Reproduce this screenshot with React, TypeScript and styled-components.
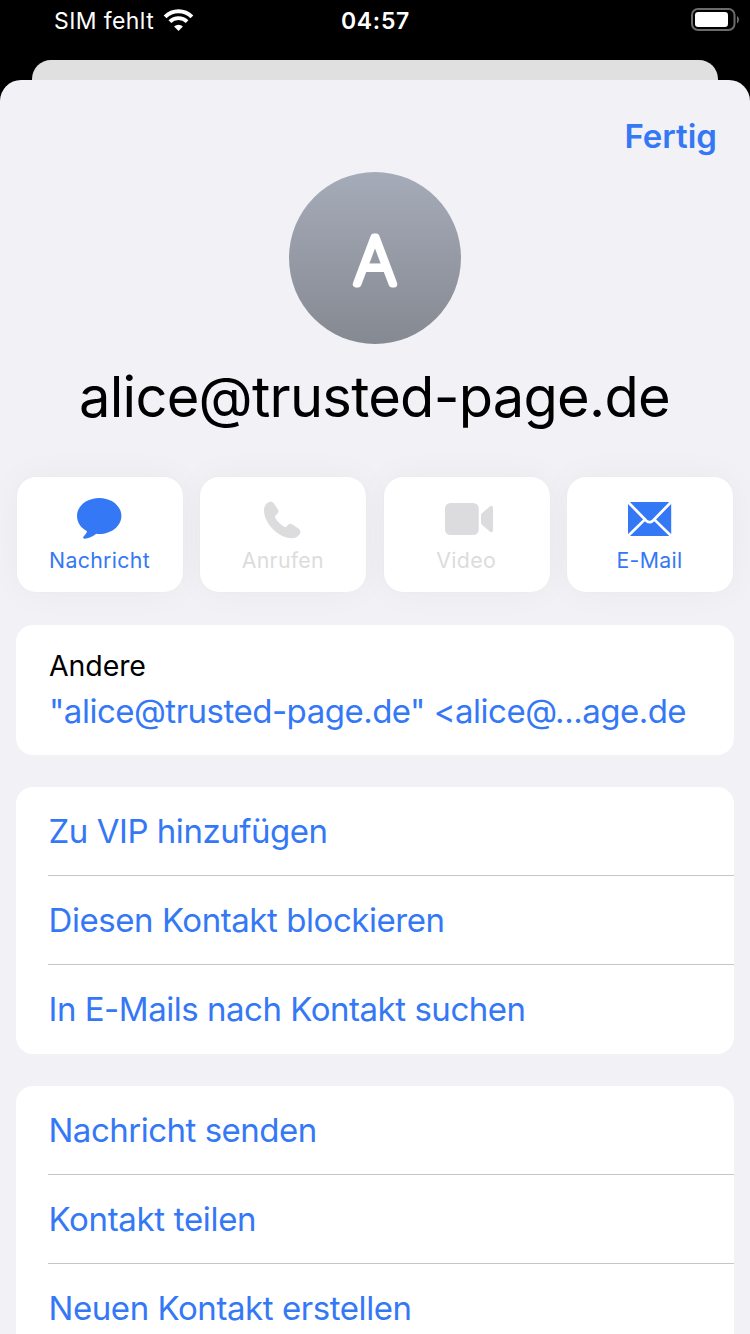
import React from 'react';
import styled, { createGlobalStyle } from 'styled-components';

const BLUE = '#3478f6';
const DISABLED = '#dcdcde';

const GlobalStyle = createGlobalStyle`
  * { box-sizing: border-box; }
  html, body { margin: 0; padding: 0; background: #000; overflow: hidden; }
  body { font-family: Inter, "Liberation Sans", sans-serif; color: #000; }
`;

const Screen = styled.div`
  width: 750px;
  height: 1334px;
  overflow: hidden;
  display: flex;
  flex-direction: column;
  background: #000;
`;

const StatusBar = styled.header`
  flex: none;
  height: 60px;
  padding: 0 11px 0 54px;
  display: grid;
  grid-template-columns: 1fr auto 1fr;
  align-items: start;
  color: #fff;
  font-size: 23px;
  line-height: 43px;
`;

const Carrier = styled.div`
  display: flex;
  gap: 9px;
  letter-spacing: 0.4px;
`;

const Clock = styled.time`
  font-weight: 600;
  letter-spacing: 0.7px;
  margin-right: 42px;
`;

const BatterySlot = styled.div`
  display: flex;
  justify-content: flex-end;
  padding-top: 7px;
`;

const WifiSvg = styled.svg`
  display: block;
  margin-top: 8px;
`;

const BackSheet = styled.div`
  flex: none;
  height: 20px;
  margin: 0 32px;
  border-radius: 19px 19px 0 0;
  background: #e0e0e0;
`;

const Sheet = styled.main`
  flex: 1;
  min-height: 0;
  display: flex;
  flex-direction: column;
  border-radius: 21px 21px 0 0;
  background: #f2f1f6;
  overflow: hidden;
`;

const SheetHeader = styled.div`
  flex: none;
  height: 92px;
  padding: 36px 33px 0;
  display: flex;
  justify-content: flex-end;
`;

const DoneButton = styled.button`
  height: 40px;
  padding: 0;
  border: 0;
  background: none;
  color: ${BLUE};
  font: 600 33px/40px Inter, "Liberation Sans", sans-serif;
  letter-spacing: 0;
`;

const Avatar = styled.div`
  flex: none;
  align-self: center;
  width: 172px;
  height: 172px;
  border-radius: 50%;
  background: linear-gradient(#a6abb9, #858991);
`;

const Monogram = styled.text`
  font-family: Inter, "Liberation Sans", sans-serif;
  font-size: 65px;
  font-weight: 100;
  text-anchor: middle;
  fill: #fff;
  stroke: #fff;
  stroke-width: 7px;
  stroke-linejoin: round;
`;

const Name = styled.h1`
  flex: none;
  margin: 19px 0 0;
  text-align: center;
  font-size: 56px;
  font-weight: 400;
  line-height: 68px;
  letter-spacing: -0.73px;
  text-indent: -1px;
  white-space: nowrap;
`;

const Actions = styled.nav`
  flex: none;
  margin: 46px 17px 0;
  display: flex;
  justify-content: space-between;
`;

const ActionButton = styled.button<{ $tint: string }>`
  width: 166px;
  height: 115px;
  padding: 16px 0 0;
  border: 0;
  border-radius: 19px;
  display: flex;
  flex-direction: column;
  align-items: center;
  gap: 6px;
  background: #fff;
  box-shadow: 0 0 2px rgba(0, 0, 0, 0.04), 0 0 36px rgba(0, 0, 0, 0.04);
  color: ${(p) => p.$tint};
  font: 400 21.3px/26px Inter, "Liberation Sans", sans-serif;
  letter-spacing: 0.32px;
`;

const ActionLabel = styled.span`
  margin-right: 1px;
`;

const ActionIcon = styled.svg`
  flex: none;
  display: block;
  fill: currentColor;
`;

const Card = styled.section<{ $gap: number }>`
  flex: none;
  margin: ${(p) => p.$gap}px 16px 0;
  border-radius: 17px;
  background: #fff;
  overflow: hidden;
`;

const Field = styled.div`
  height: 130px;
  padding: 23px 0 0 33px;
  white-space: nowrap;
`;

const FieldLabel = styled.div`
  font-size: 28.5px;
  line-height: 36px;
  letter-spacing: -0.1px;
`;

const FieldValue = styled.div`
  margin: 7px 0 0;
  color: ${BLUE};
  font-size: 33px;
  line-height: 40px;
  letter-spacing: -0.5px;
`;

const List = styled.ul`
  margin: 0;
  padding: 0 0 0 32px;
  list-style: none;
`;

const ListRow = styled.li<{ $tracking: number }>`
  height: 89px;
  border-bottom: 1px solid #c6c6c8;
  color: ${BLUE};
  font-size: 33px;
  line-height: 88px;
  letter-spacing: ${(p) => p.$tracking}px;
  text-indent: 0.5px;
  white-space: nowrap;
  &:last-child { border-bottom: 0; }
`;

const Wifi = () => (
  <WifiSvg width="32" height="24" viewBox="0 0 32 24" fill="none" stroke="#fff">
    <path d="M2.1 8.8a19 19 0 0 1 26.8 0" strokeWidth="4" />
    <path d="M6.9 13.7a12.2 12.2 0 0 1 17.2 0" strokeWidth="3.8" />
    <path d="M15.5 22.9l-4.4-4.4a6.2 6.2 0 0 1 8.8 0z" fill="#fff" stroke="none" />
  </WifiSvg>
);

const Battery = () => (
  <svg width="48" height="26" viewBox="0 0 48 26">
    <rect x="1" y="2" width="42.5" height="21" rx="6" fill="none" stroke="#6b6b6b" strokeWidth="2" />
    <rect x="4" y="5" width="33" height="15" rx="3.2" fill="#fff" />
    <path d="M46 9c2.6 1.4 2.6 6 0 7.4z" fill="#6b6b6b" />
  </svg>
);

const icons = {
  message: (
    <path d="M27.2 5C39.5 5 49.4 13 49.4 23S39.5 41 27.2 41q-1.6 0-2.9-.2C20.5 43.9 16.5 45.7 12.6 45.7c-1.5 0-1.9-1.2-1-2.2 1.5-1.6 3-3.3 3.4-5.3C8.8 34.9 5 29.400 5 23 5 13 14.9 5 27.2 5z" />
  ),
  phone: (
    <path d="M9 17.5C9 12.5 12.2 8.7 15.6 8.7c1.5 0 2.4.6 3.3 1.9l3.9 5.7c1 1.5.9 2.9-.3 4.2l-2.1 2.2c-.5.5-.6.9-.3 1.6 1.2 3 5.7 7.8 9.4 9.6.8.4 1.2.3 1.7-.2l2-2c1.4-1.3 2.6-1.4 4.2-.3l6.1 4.2c1.400 1 1.9 1.9 1.9 3.2 0 3.5-3.9 6.4-8.6 6.4C23.5 45.2 9 30 9 17.5z" />
  ),
  video: (
    <>
      <rect x="6" y="10" width="33.7" height="32" rx="5.5" />
      <path d="M42 22.2q0-1.2.9-1.9l8.2-7q.9-.7 1.5-.5 1.4.3 1.4 2.2v22q0 1.9-1.4 2.2-.6.2-1.5-.5l-8.2-7q-.9-.7-.9-1.9z" />
    </>
  ),
  mail: (
    <>
      <rect x="6" y="9" width="43.2" height="34" rx="2.4" />
      <path
        d="M5.5 8.5L24.3 27.700q3.3 3 6.6 0L49.7 8.5M5.5 43.5L23 26.4M49.7 43.5L32.2 26.4"
        fill="none"
        stroke="#fff"
        strokeWidth="2.7"
      />
    </>
  ),
};

const actions: { label: string; icon: keyof typeof icons; enabled: boolean }[] = [
  { label: 'Nachricht', icon: 'message', enabled: true },
  { label: 'Anrufen', icon: 'phone', enabled: false },
  { label: 'Video', icon: 'video', enabled: false },
  { label: 'E-Mail', icon: 'mail', enabled: true },
];

const groups = [
  [
    { label: 'Zu VIP hinzufügen', tracking: -0.46 },
    { label: 'Diesen Kontakt blockieren', tracking: -0.44 },
    { label: 'In E-Mails nach Kontakt suchen', tracking: -0.47 },
  ],
  [
    { label: 'Nachricht senden', tracking: -0.5 },
    { label: 'Kontakt teilen', tracking: -0.32 },
    { label: 'Neuen Kontakt erstellen', tracking: -0.43 },
  ],
];

export default function App() {
  return (
    <Screen>
      <GlobalStyle />
      <StatusBar>
        <Carrier>
          <span>SIM fehlt</span>
          <Wifi />
        </Carrier>
        <Clock>04:57</Clock>
        <BatterySlot>
          <Battery />
        </BatterySlot>
      </StatusBar>
      <BackSheet />
      <Sheet>
        <SheetHeader>
          <DoneButton>Fertig</DoneButton>
        </SheetHeader>
        <Avatar>
          <svg width="172" height="172" viewBox="0 0 172 172">
            <Monogram x="86" y="112">A</Monogram>
          </svg>
        </Avatar>
        <Name>alice@trusted-page.de</Name>
        <Actions>
          {actions.map((a) => (
            <ActionButton key={a.label} $tint={a.enabled ? BLUE : DISABLED}>
              <ActionIcon width="56" height="48" viewBox="0 0 56 48">
                {icons[a.icon]}
              </ActionIcon>
              <ActionLabel>{a.label}</ActionLabel>
            </ActionButton>
          ))}
        </Actions>
        <Card $gap={33}>
          <Field>
            <FieldLabel>Andere</FieldLabel>
            <FieldValue>"alice@trusted-page.de" &lt;alice@...age.de</FieldValue>
          </Field>
        </Card>
        {groups.map((rows) => (
          <Card $gap={32} key={rows[0].label}>
            <List>
              {rows.map((r) => (
                <ListRow key={r.label} $tracking={r.tracking}>
                  {r.label}
                </ListRow>
              ))}
            </List>
          </Card>
        ))}
      </Sheet>
    </Screen>
  );
}
